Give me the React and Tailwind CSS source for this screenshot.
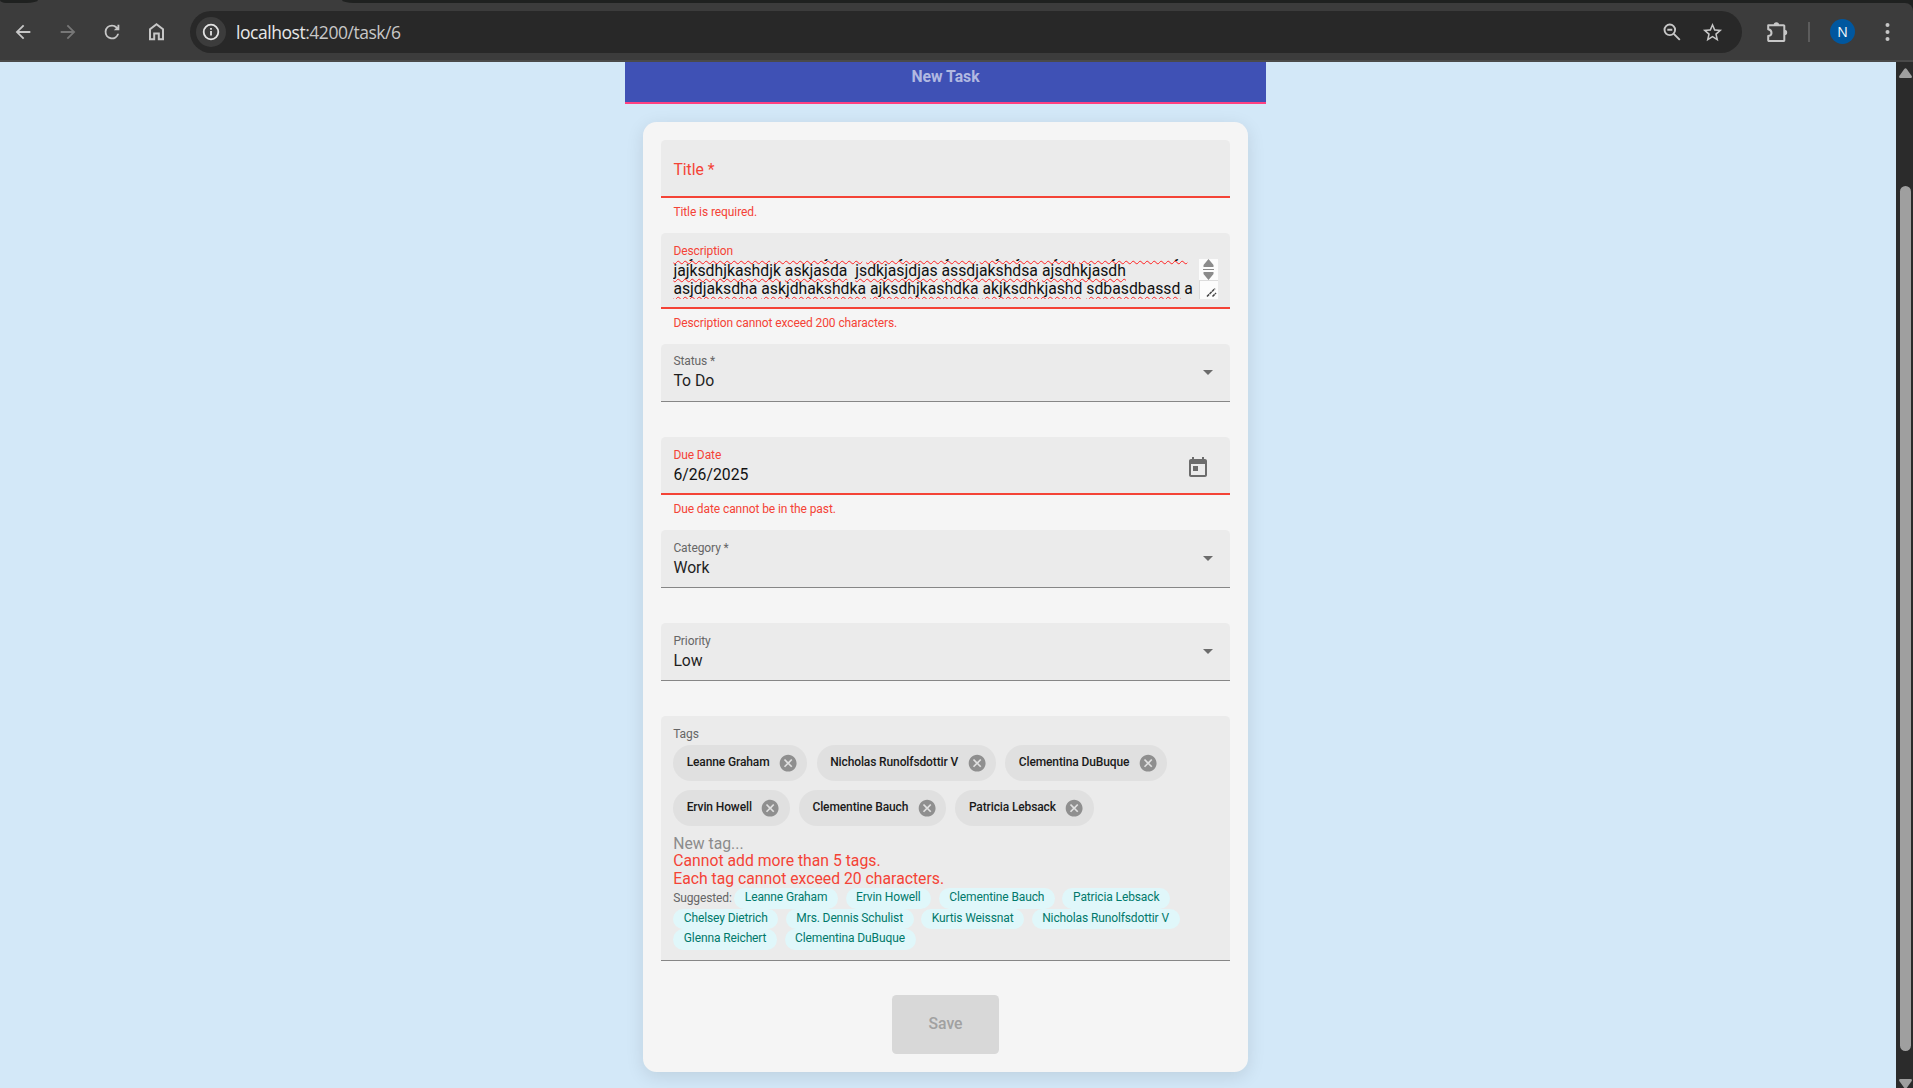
const Svg = ({ size = 24, className = "", children, fill = "currentColor" }) => (
  <svg width={size} height={size} viewBox="0 0 24 24" fill={fill} className={"shrink-0 " + className}>
    {children}
  </svg>
);

const ToolCell = ({ children, className = "w-[45px]" }) => (
  <div className={"flex shrink-0 items-center justify-center " + className}>{children}</div>
);

function BrowserBar() {
  return (
    <div className="h-[62px] bg-[#1f2120] text-[#c7c7c7]">
      <div className="flex h-[3px] bg-[#3c3c3c]">
        <div className="w-[38px] rounded-br-[12px_3px] rounded-bl-[6px_3px] bg-[#1f2120]" />
        <div className="w-[304px]" />
        <div className="flex-1 rounded-bl-[12px_3px] bg-[#1f2120]" />
      </div>
      <div className="flex h-[59px] items-start rounded-tr-[8px] border-b-2 border-[#4a4a4a] bg-[#3c3c3c]">
        <div className="flex h-[57px] pr-px">
          <ToolCell>
            <Svg size={22} className="shrink-0">
              <path d="M20 11H7.83l5.59-5.59L12 4l-8 8 8 8 1.41-1.41L7.83 13H20v-2z" />
            </Svg>
          </ToolCell>
          <ToolCell>
            <Svg size={22} className="text-[#777777]">
              <path d="m12 4-1.41 1.41L16.17 11H4v2h12.17l-5.58 5.59L12 20l8-8z" />
            </Svg>
          </ToolCell>
          <ToolCell className="w-[44px]">
            <Svg size={22}>
              <path d="M17.65 6.35A7.96 7.96 0 0 0 12 4a8 8 0 1 0 7.73 10h-2.08A6 6 0 1 1 12 6c1.66 0 3.14.69 4.22 1.78L14 10h6V4h-2v2.7z" />
            </Svg>
          </ToolCell>
          <ToolCell>
            <svg width="17" height="19" viewBox="0 0 17 19" fill="none" stroke="currentColor" strokeWidth="2">
              <path d="M2 17.2V7.3L8.5 2.2 15 7.3v9.9h-4.2v-5.7H6.2v5.7z" />
            </svg>
          </ToolCell>
        </div>
        <div className="mt-[8px] ml-[10px] flex h-[42px] w-[1552px] items-center rounded-full bg-[#282828] pr-[10px] pl-[6px]">
          <div className="flex size-[30px] items-center justify-center rounded-full bg-[#3c3c3c]">
            <svg width="18" height="18" viewBox="0 0 18 18" fill="none" stroke="#e3e3e3" strokeWidth="1.8">
              <circle cx="9" cy="9" r="7.3" />
              <path d="M9 8v4.6M9 5v1.8" />
            </svg>
          </div>
          <div className="ml-[10px] flex-1 font-['Open_Sans',sans-serif] text-[17.5px] leading-6 tracking-[-0.46px] text-[#c7c7c7]">
            <span className="text-[#e8e8e8]">localhost</span>:4200/task/6
          </div>
          <ToolCell className="w-[41px]">
            <svg width="18" height="18" viewBox="0 0 18 18" fill="none" stroke="currentColor" strokeWidth="1.9">
              <circle cx="6.8" cy="6.8" r="5.3" />
              <path d="M4.3 6.8h5M10.8 10.8l6 6" />
            </svg>
          </ToolCell>
          <ToolCell className="w-[40px]">
            <Svg size={23}>
              <path d="m22 9.24-7.19-.62L12 2 9.19 8.63 2 9.24l5.46 4.73L5.82 21 12 17.27 18.18 21l-1.63-7.03L22 9.24zM12 15.4l-3.76 2.27 1-4.28-3.32-2.88 4.38-.38L12 6.1l1.71 4.04 4.38.38-3.32 2.88 1 4.28L12 15.4z" />
            </Svg>
          </ToolCell>
        </div>
        <div className="ml-[14px] flex h-[57px] items-center">
          <ToolCell className="w-[41px]">
            <svg width="22" height="22" viewBox="0 0 22 22">
              <path
                d="M2.2 4.2h15.3a.8.8 0 0 1 .8.8v14.300a.8.8 0 0 1-.8.8H3a.8.8 0 0 1-.8-.8v-4.200c2-.4 3.300-1.600 3.300-3.200S4.200 8.700 2.200 8.300z"
                fill="none"
                stroke="currentColor"
                strokeWidth="2"
                strokeLinejoin="round"
              />
              <path d="M7.700 4a2.700 2.700 0 0 1 5.400 0zM18.500 8.800a2.700 2.700 0 0 1 0 5.400z" fill="currentColor" />
            </svg>
          </ToolCell>
          <div className="ml-[11px] h-5 w-0.5 bg-[#5c5c5c]" />
          <div className="ml-5 flex size-[25px] items-center justify-center rounded-full bg-[#00579f] font-['Open_Sans',sans-serif] text-[14px] leading-none text-white">
            N
          </div>
          <svg width="5" height="20" viewBox="0 0 5 20" fill="currentColor" className="ml-[30px]">
            <circle cx="2.5" cy="3" r="2" />
            <circle cx="2.5" cy="10" r="2" />
            <circle cx="2.5" cy="17" r="2" />
          </svg>
        </div>
      </div>
    </div>
  );
}

const ErrorText = ({ children }) => (
  <div className="h-[35px] pt-[5px] pl-[12.4px] text-[12px] leading-[18px] tracking-[-0.09px] text-[#f44336]">
    {children}
  </div>
);

const FieldLabel = ({ error, children }) => (
  <div
    className={
      "text-[12px] leading-[18px] tracking-[-0.09px] " + (error ? "text-[#f44336]" : "text-[#666666]")
    }
  >
    {children}
  </div>
);

function SelectField({ label, value, className = "" }) {
  return (
    <div className="mb-[35px] flex h-[58px] items-center justify-between rounded-t-[4.5px] border-b border-[#868686] bg-[#ebebeb] pr-[17px] pl-[12.4px]">
      <div className={className}>
        <FieldLabel>{label}</FieldLabel>
        <div className="mt-[2px] text-[15.75px] leading-[18px] text-[#1f1f1f]">{value}</div>
      </div>
      <svg width="10" height="5" viewBox="0 0 10 5" fill="#6c6c6c">
        <path d="M0 0h10L5 5z" />
      </svg>
    </div>
  );
}

const LINES = [
  ["asjdhaksdhka", " ", "ashdkajsdka", " ", "asdkjashdajsda", " ", "asjkdjashdjka", " ", "asdkjashdksdjk"],
  ["jajksdhjkashdjk", " ", "askjasda", "  ", "jsdkjasjdjas", " ", "assdjakshdsa", " ", "ajsdhkjasdh"],
  ["asjdjaksdha", " ", "askjdhakshdka", " ", "ajksdhjkashdka", " ", "akjksdhkjashd", " ", "sdbasdbassd", " ", "a"],
];

function DescriptionField() {
  return (
    <div className="h-[76px] rounded-t-[4.5px] border-b-2 border-[#f44336] bg-[#ebebeb] pt-[9px] pl-[12.4px]">
      <FieldLabel error>Description</FieldLabel>
      <div className="-mt-px flex h-10 w-[545px]">
        <div className="flex h-10 w-[526px] flex-col justify-end overflow-hidden pb-px text-[15.75px] leading-[18px] text-[#111111]">
          {LINES.map((words, i) => (
            <div key={i} className="h-[18px] shrink-0 whitespace-pre">
              {words.map((w, j) =>
                w.trim().length > 1 ? (
                  <span
                    key={j}
                    className="underline decoration-[#ff2020] decoration-wavy decoration-[1.25px] underline-offset-[2px] [text-decoration-skip-ink:none]"
                  >
                    {w}
                  </span>
                ) : (
                  w
                )
              )}
            </div>
          ))}
        </div>
        <svg width="19" height="40" viewBox="0 0 19 40">
          <path d="M0 0h19v40H0z" fill="#fcfcfc" />
          <path d="M0 21.500h19M.5 21v19" stroke="#dcdcdc" fill="none" />
          <path d="M9.500 0 14.500 6v2h-10V6zM9.500 21 14.500 15v-2h-10v2z" fill="#8b8b8b" />
          <path d="M4 10.500h11" stroke="#8b8b8b" />
          <path d="m8 37.500 8-8M13.500 37.500l3.500-3.500" stroke="#444444" strokeWidth="1.500" strokeDasharray="3 .6" />
        </svg>
      </div>
    </div>
  );
}

const TAGS = [
  "Leanne Graham",
  "Nicholas Runolfsdottir V",
  "Clementina DuBuque",
  "Ervin Howell",
  "Clementine Bauch",
  "Patricia Lebsack",
];

const SUGGESTED = [
  "Leanne Graham",
  "Ervin Howell",
  "Clementine Bauch",
  "Patricia Lebsack",
  "Chelsey Dietrich",
  "Mrs. Dennis Schulist",
  "Kurtis Weissnat",
  "Nicholas Runolfsdottir V",
  "Glenna Reichert",
  "Clementina DuBuque",
];

function TagsField() {
  return (
    <div className="h-[245px] rounded-t-[4.5px] border-b border-[#868686] bg-[#ebebeb] px-[12.2px] pt-[9px]">
      <FieldLabel>Tags</FieldLabel>
      <div className="mt-[2px] flex flex-wrap gap-x-[9.4px] gap-y-[9px]">
        {TAGS.map((t) => (
          <div
            key={t}
            className="flex h-9 items-center rounded-full bg-[#e0e0e0] pr-[9px] pl-[13.5px] text-[12px] leading-[18px] font-medium tracking-[-0.12px] text-[#1a1a1a]"
          >
            <span className="-mt-[2px]">{t}</span>
            <Svg size={20.25} className="ml-[8.5px] text-[#8f8f8f]">
              <path d="M12 2C6.47 2 2 6.47 2 12s4.470 10 10 10 10-4.470 10-10S17.530 2 12 2zm5 13.590L15.590 17 12 13.410 8.410 17 7 15.590 10.590 12 7 8.410 8.410 7 12 10.590 15.590 7 17 8.410 13.410 12 17 15.590z" />
            </Svg>
          </div>
        ))}
      </div>
      <div className="mt-[8px] text-[15.75px] leading-[18px] text-[#f44336]">
        <div className="pt-px text-[#8c8c8c]">New tag...</div>
        <div className="-mt-px">Cannot add more than 5 tags.</div>
        <div>Each tag cannot exceed 20 characters.</div>
      </div>
      <div className="flex flex-wrap gap-x-[7.5px] text-[12px] leading-[18px] tracking-[-0.12px]">
        <span className="-mr-[5px] pt-px text-[#666666]">Suggested:</span>
        {SUGGESTED.map((t) => (
          <span key={t} className="h-[20.5px] rounded-full bg-[#e0f7fa] px-[10.6px] text-[#00796b]">
            {t}
          </span>
        ))}
      </div>
    </div>
  );
}

function TaskForm() {
  return (
    <div className="mt-[18px] h-[950px] w-[605px] rounded-[13.5px] bg-[#f5f5f5] p-[18px] shadow-[0_4.5px_18px_rgba(0,0,0,0.1)]">
      <div className="flex h-[58px] items-center rounded-t-[4.5px] border-b-2 border-[#f44336] bg-[#ebebeb] pt-[3px] pl-[12.4px] text-[15.75px] leading-[18px] text-[#f44336]">
        Title *
      </div>
      <ErrorText>Title is required.</ErrorText>
      <DescriptionField />
      <ErrorText>Description cannot exceed 200 characters.</ErrorText>
      <SelectField label="Status *" value="To Do" className="-mt-[3px]" />
      <div className="flex h-[58px] items-center justify-between rounded-t-[4.5px] border-b-2 border-[#f44336] bg-[#ebebeb] pr-5 pl-[12.4px]">
        <div>
          <FieldLabel error>Due Date</FieldLabel>
          <div className="mt-[2px] text-[15.75px] leading-[18px] text-[#111111]">6/26/2025</div>
        </div>
        <Svg size={24} className="mt-[5px] text-[#6c6c6c]">
          <path d="M19 3h-1V1h-2v2H8V1H6v2H5c-1.110 0-1.990.9-1.990 2L3 19c0 1.100.89 2 2 2h14c1.100 0 2-.9 2-2V5c0-1.100-.9-2-2-2zm0 16H5V8h14v11zM7 10h5v5H7z" />
        </Svg>
      </div>
      <ErrorText>Due date cannot be in the past.</ErrorText>
      <SelectField label="Category *" value="Work" className="-mt-px" />
      <SelectField label="Priority" value="Low" className="-mt-px" />
      <TagsField />
      <button className="mx-auto mt-[34px] flex h-[59px] w-[107px] items-center justify-center rounded-[4.5px] bg-[#d8d8d8] pb-px text-[15.75px] leading-[18px] font-medium text-[#a1a1a1]">
        Save
      </button>
    </div>
  );
}

function PageScrollbar() {
  return (
    <div className="flex w-[17px] flex-col items-center bg-[#2b2b2b] pt-[6px] pl-[2px] text-[#9f9f9f]">
      <svg width="13" height="10" viewBox="0 0 13 10" fill="currentColor" className="shrink-0">
        <path d="M5.300 1Q6.500-.6 7.700 1l5 7q.8 2-1 2H1.300q-1.800 0-1-2z" />
      </svg>
      <div className="mt-[108px] h-[865px] w-[11px] shrink-0 rounded-full bg-[#9f9f9f]" />
      <svg width="13" height="9" viewBox="0 0 13 9" fill="currentColor" className="mt-7 shrink-0">
        <path d="M5.300 9h2.400l5-7q.8-2-1-2H1.300q-1.800 0-1 2z" />
      </svg>
    </div>
  );
}

export default function App() {
  return (
    <div className="h-[1088px] w-[1913px] overflow-hidden bg-[#d3e8f8] font-[Roboto,sans-serif]">
      <BrowserBar />
      <div className="flex h-[1026px]">
        <div className="flex flex-1 flex-col items-center pr-[5px]">
          <div className="flex h-[42px] w-[641px] items-start justify-center border-b-2 border-[#ff4081] bg-[#3f51b5] pt-[6px] text-[15.75px] leading-[18px] font-bold text-[#b2b9e1]">
            New Task
          </div>
          <TaskForm />
        </div>
        <PageScrollbar />
      </div>
    </div>
  );
}
